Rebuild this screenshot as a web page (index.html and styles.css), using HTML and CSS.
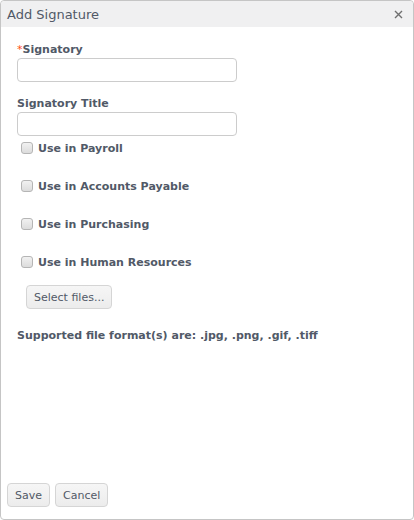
FILE: index.html
```html
<!DOCTYPE html>
<html lang="en">
<head>
    <meta charset="UTF-8">
    <meta name="viewport" content="width=device-width, initial-scale=1.0">
    <title>Add Signature</title>
    <link rel="stylesheet" href="styles.css">
</head>
<body>
    <div class="window">
        <div class="titlebar">
            <span class="title">Add Signature</span>
            <svg class="close" width="9" height="9" viewBox="0 0 9 9">
                <path d="M1 1L8 8M8 1L1 8" stroke="#6f6f6f" stroke-width="1.4" fill="none"/>
            </svg>
        </div>
        <div class="content">
            <div class="field">
                <label class="label"><span class="req">*</span>Signatory</label>
                <input type="text" class="textbox">
            </div>
            <div class="field">
                <label class="label">Signatory Title</label>
                <input type="text" class="textbox">
            </div>
            <div class="checks">
                <label class="check"><span class="box"></span>Use in Payroll</label>
                <label class="check"><span class="box"></span>Use in Accounts Payable</label>
                <label class="check"><span class="box"></span>Use in Purchasing</label>
                <label class="check"><span class="box"></span>Use in Human Resources</label>
            </div>
            <div class="upload">
                <button class="btn">Select files...</button>
            </div>
            <p class="note">Supported file format(s) are: .jpg, .png, .gif, .tiff</p>
        </div>
        <div class="actions">
            <button class="btn">Save</button>
            <button class="btn">Cancel</button>
        </div>
    </div>
</body>
</html>
```

FILE: styles.css
```css
body, html {
    margin: 0;
    padding: 0;
    height: 100%;
    font-family: "DejaVu Sans", Verdana, sans-serif;
    font-size: 11px;
    color: #515967;
    background: #fff;
}
.window {
    box-sizing: border-box;
    height: 520px;
    border: 1px solid #c5c5c5;
    border-radius: 4px;
    display: flex;
    flex-direction: column;
}
.titlebar {
    height: 26px;
    background-color: #f0f0f1;
    display: flex;
    align-items: center;
    justify-content: space-between;
    padding: 0 10px 0 6px;
    border-radius: 4px 4px 0 0;
}
.title {
    font-size: 13px;
    color: #515967;
}
.close {
    display: block;
}
.content {
    flex: 1;
    padding: 16px 16px 0;
}
.field {
    margin-bottom: 15px;
}
.label {
    display: block;
    font-weight: bold;
    line-height: 13px;
    margin-bottom: 2px;
}
.req {
    color: #ff4b14;
    font-weight: normal;
}
.textbox {
    display: block;
    box-sizing: border-box;
    width: 220px;
    height: 24px;
    border: 1px solid #cccccc;
    border-radius: 4px;
    margin: 0;
}
.field:nth-child(2) {
    margin-bottom: 5px;
}
.checks {
    display: flex;
    flex-direction: column;
    gap: 24px;
    padding-left: 4px;
}
.check {
    display: flex;
    align-items: center;
    gap: 5px;
    height: 14px;
    font-weight: bold;
}
.box {
    box-sizing: border-box;
    width: 12px;
    height: 12px;
    border: 1px solid #b5b5b5;
    border-radius: 3px;
    background: linear-gradient(#f1f1f1, #dcdcdc);
}
.upload {
    padding-left: 9px;
    margin-top: 16px;
}
.btn {
    font-family: "DejaVu Sans", Verdana, sans-serif;
    font-size: 11px;
    color: #515967;
    height: 24px;
    padding: 0 7px;
    border: 1px solid #d5d5d5;
    border-radius: 4px;
    background: linear-gradient(#f6f6f6, #ececec);
}
.note {
    font-weight: bold;
    margin: 20px 0 0;
}
.actions {
    display: flex;
    gap: 5px;
    padding: 0 6px 12px;
}
```
